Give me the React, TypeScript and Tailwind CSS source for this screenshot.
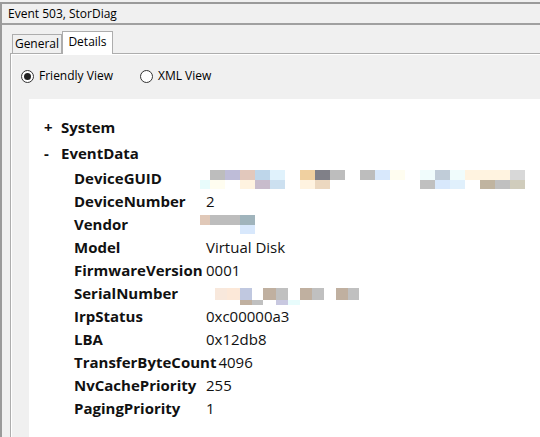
import React from 'react'

type Cell = [number, number, number, number, string]

// redaction mosaics, coordinates relative to the value column (x=200) and the row top
const guidCells: Cell[] = [
  [10, 3, 15, 10, '#bdbdbd'],
  [25, 3, 15, 10, '#bebcd8'],
  [40, 3, 15, 10, '#e2c8bc'],
  [55, 3, 15, 10, '#bed6ea'],
  [70, 3, 15, 10, '#e0f2fc'],
  [100, 3, 15, 10, '#f0d0a0'],
  [115, 3, 15, 10, '#808088'],
  [130, 3, 15, 10, '#bdbdbd'],
  [160, 3, 15, 10, '#bdbdbd'],
  [175, 3, 15, 10, '#d8e8fc'],
  [190, 3, 15, 10, '#fffdf0'],
  [220, 3, 15, 10, '#f0fcfc'],
  [235, 3, 15, 10, '#c0ccd8'],
  [250, 3, 15, 10, '#f0fcfc'],
  [265, 3, 15, 10, '#fff3e0'],
  [280, 3, 15, 10, '#fff3e0'],
  [295, 3, 15, 10, '#fff3e0'],
  [310, 3, 15, 10, '#d8d8d8'],
  [0, 13, 10, 9, '#e8fcfc'],
  [10, 13, 15, 9, '#fffdf0'],
  [40, 13, 15, 9, '#fff3e0'],
  [55, 13, 15, 9, '#c8bccc'],
  [70, 13, 15, 9, '#cce0f0'],
  [100, 13, 15, 9, '#fff3e0'],
  [115, 13, 15, 9, '#ecd8c0'],
  [220, 13, 15, 9, '#c0c0c0'],
  [235, 13, 15, 9, '#d8e8fc'],
  [250, 13, 15, 9, '#e0f0fc'],
  [280, 13, 15, 9, '#c0b4a0'],
  [295, 13, 15, 9, '#c0c0c0'],
  [310, 13, 15, 9, '#d0ccbc'],
]

const vendorCells: Cell[] = [
  [0, 2, 10, 10, '#e0c8b8'],
  [10, 2, 30, 10, '#bdbdbd'],
  [40, 2, 15, 10, '#a0b4bc'],
  [40, 12, 15, 9, '#d8e8fc'],
]

const serialCells: Cell[] = [
  [15, 6, 12, 12, '#f8e8dc'],
  [27, 6, 13, 12, '#fce8d8'],
  [40, 6, 12, 12, '#c0c8e0'],
  [63, 6, 13, 12, '#c0b0a0'],
  [76, 6, 12, 12, '#c0c0c0'],
  [100, 6, 12, 12, '#c0b0a0'],
  [112, 6, 12, 12, '#c0c0c0'],
  [136, 6, 12, 12, '#c0b0a0'],
  [148, 6, 11, 12, '#c0c0c0'],
  [40, 18, 12, 5, '#c0b0a0'],
  [52, 18, 11, 5, '#c0c0c0'],
  [76, 18, 12, 5, '#c8c8e0'],
  [88, 18, 12, 5, '#e8fcfc'],
]

const Mosaic = ({ cells, width }: { cells: Cell[]; width: number }) => (
  <svg width={width} height={23} className="-ml-[6px] block shrink-0">
    {cells.map(([x, y, w, h, c], i) => (
      <rect key={i} x={x} y={y} width={w} height={h} fill={c} />
    ))}
  </svg>
)

const fields: { name: string; value?: string; mosaic?: React.ReactNode }[] = [
  { name: 'DeviceGUID', mosaic: <Mosaic cells={guidCells} width={330} /> },
  { name: 'DeviceNumber', value: '2' },
  { name: 'Vendor', mosaic: <Mosaic cells={vendorCells} width={60} /> },
  { name: 'Model', value: 'Virtual Disk' },
  { name: 'FirmwareVersion', value: '0001' },
  { name: 'SerialNumber', mosaic: <Mosaic cells={serialCells} width={165} /> },
  { name: 'IrpStatus', value: '0xc00000a3' },
  { name: 'LBA', value: '0x12db8' },
  { name: 'TransferByteCount', value: '4096' },
  { name: 'NvCachePriority', value: '255' },
  { name: 'PagingPriority', value: '1' },
]

const Radio = ({ checked, label }: { checked?: boolean; label: string }) => (
  <div className="flex items-center gap-[5px]">
    <div className="flex h-[13px] w-[13px] items-center justify-center rounded-full border border-[#333333] bg-white">
      {checked && <div className="h-[7px] w-[7px] rounded-full bg-[#222222]" />}
    </div>
    <span>{label}</span>
  </div>
)

export default function App() {
  return (
    <div className="h-[437px] w-[540px] overflow-hidden bg-[#f0f0f0] pt-[2px] font-['Open_Sans','Noto_Sans',sans-serif] text-[12px] text-black">
      <div className="h-full border-l-2 border-t-2 border-[#9a9a9a]">
        {/* title */}
        <div className="flex h-[21px] items-center border-b-2 border-[#a0a0a0] pl-[6px]">
          Event 503, StorDiag
        </div>

        <div className="ml-[8px] h-full">
          {/* tabs */}
          <div className="flex h-[28px] items-end pl-[2px]">
            <div className="flex h-[19px] w-[50px] items-center justify-center border border-b-0 border-[#adadad] bg-[#f0f0f0]">
              General
            </div>
            <div className="relative z-10 -mb-[1px] flex h-[23px] w-[51px] items-start justify-center border border-b-0 border-[#adadad] bg-white pt-[1px]">
              Details
            </div>
          </div>

          {/* tab page */}
          <div className="h-full border-l border-t border-[#adadad] bg-[#f0f0f0]">
            <div className="h-full border-l border-t border-white">
              <div className="flex gap-[27px] pl-[9px] pt-[12px]">
                <Radio checked label="Friendly View" />
                <Radio label="XML View" />
              </div>

              <div className="ml-[17px] mt-[14px] h-full bg-white pt-[15px] text-[15px] text-[#111111]">
                <div className="flex h-[26px] items-center font-bold">
                  <span className="w-[32px] pl-[15px]">+</span>
                  <span>System</span>
                </div>
                <div className="flex h-[27px] items-center font-bold">
                  <span className="w-[32px] pl-[15px]">-</span>
                  <span>EventData</span>
                </div>
                {fields.map((f) => (
                  <div key={f.name} className="flex h-[23px] items-center pl-[45px]">
                    <span className="mr-[2px] min-w-[130px] font-bold">{f.name}</span>
                    {f.mosaic ?? <span>{f.value}</span>}
                  </div>
                ))}
              </div>
            </div>
          </div>
        </div>
      </div>
    </div>
  )
}
